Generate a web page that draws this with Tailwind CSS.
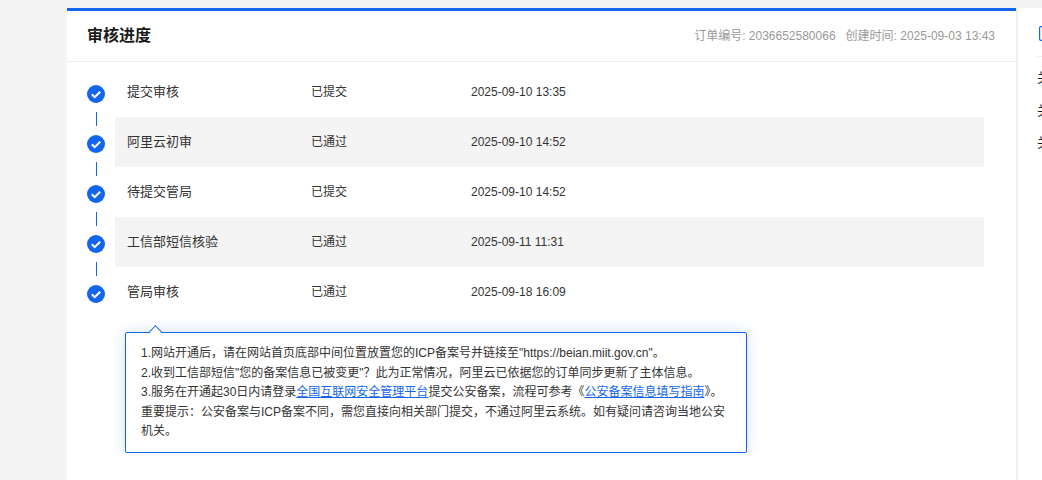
<!DOCTYPE html>
<html lang="zh-CN">
<head>
    <meta charset="UTF-8">
    <title>审核进度</title>
    <script src="https://cdn.jsdelivr.net/npm/@tailwindcss/browser@4"></script>
</head>
<body class="bg-[#f4f4f4] h-[480px] overflow-hidden font-['Liberation_Sans','Noto_Sans_CJK_SC',sans-serif] text-xs text-[#333]">
    <div class="flex pt-2 pl-[67px] h-[480px]">
        <!-- main card -->
        <main class="w-[949px] shrink-0 bg-white border-t-[3px] border-[#1366ec]">
            <header class="h-[51px] flex items-center justify-between pl-5 pr-[21px] border-b border-[#eee]">
                <h2 class="text-base font-bold text-[#1a1a1a]">审核进度</h2>
                <div class="flex gap-[10px] text-[#999]">
                    <span>订单编号: 2036652580066</span>
                    <span>创建时间: 2025-09-03 13:43</span>
                </div>
            </header>

            <div class="pt-[5px] pl-5 pr-8">
                <div class="flex h-[50px]">
                    <div class="w-[18px] shrink-0 flex flex-col items-center pt-[18px]">
                        <svg class="w-[18px] h-[18px] shrink-0" viewBox="0 0 18 18"><circle cx="9" cy="9" r="9" fill="#1366ec"/><path d="M4.8 9.2l2.9 2.9L13.2 6.7" fill="none" stroke="#fff" stroke-width="2"/></svg>
                        <div class="w-px h-[14px] mt-[9px] shrink-0 bg-[#1366ec]"></div>
                    </div>
                    <div class="flex flex-1 ml-[10px] pl-3 items-center">
                        <span class="w-[184px] text-[13px]">提交审核</span>
                        <span class="w-40">已提交</span>
                        <span>2025-09-10 13:35</span>
                    </div>
                </div>
                <div class="flex h-[50px]">
                    <div class="w-[18px] shrink-0 flex flex-col items-center pt-[18px]">
                        <svg class="w-[18px] h-[18px] shrink-0" viewBox="0 0 18 18"><circle cx="9" cy="9" r="9" fill="#1366ec"/><path d="M4.8 9.2l2.9 2.9L13.2 6.7" fill="none" stroke="#fff" stroke-width="2"/></svg>
                        <div class="w-px h-[14px] mt-[9px] shrink-0 bg-[#1366ec]"></div>
                    </div>
                    <div class="flex flex-1 ml-[10px] pl-3 items-center bg-[#f4f4f4]">
                        <span class="w-[184px] text-[13px]">阿里云初审</span>
                        <span class="w-40">已通过</span>
                        <span>2025-09-10 14:52</span>
                    </div>
                </div>
                <div class="flex h-[50px]">
                    <div class="w-[18px] shrink-0 flex flex-col items-center pt-[18px]">
                        <svg class="w-[18px] h-[18px] shrink-0" viewBox="0 0 18 18"><circle cx="9" cy="9" r="9" fill="#1366ec"/><path d="M4.8 9.2l2.9 2.9L13.2 6.7" fill="none" stroke="#fff" stroke-width="2"/></svg>
                        <div class="w-px h-[14px] mt-[9px] shrink-0 bg-[#1366ec]"></div>
                    </div>
                    <div class="flex flex-1 ml-[10px] pl-3 items-center">
                        <span class="w-[184px] text-[13px]">待提交管局</span>
                        <span class="w-40">已提交</span>
                        <span>2025-09-10 14:52</span>
                    </div>
                </div>
                <div class="flex h-[50px]">
                    <div class="w-[18px] shrink-0 flex flex-col items-center pt-[18px]">
                        <svg class="w-[18px] h-[18px] shrink-0" viewBox="0 0 18 18"><circle cx="9" cy="9" r="9" fill="#1366ec"/><path d="M4.8 9.2l2.9 2.9L13.2 6.7" fill="none" stroke="#fff" stroke-width="2"/></svg>
                        <div class="w-px h-[14px] mt-[9px] shrink-0 bg-[#1366ec]"></div>
                    </div>
                    <div class="flex flex-1 ml-[10px] pl-3 items-center bg-[#f4f4f4]">
                        <span class="w-[184px] text-[13px]">工信部短信核验</span>
                        <span class="w-40">已通过</span>
                        <span>2025-09-11 11:31</span>
                    </div>
                </div>
                <div class="flex h-[50px]">
                    <div class="w-[18px] shrink-0 flex flex-col items-center pt-[18px]">
                        <svg class="w-[18px] h-[18px] shrink-0" viewBox="0 0 18 18"><circle cx="9" cy="9" r="9" fill="#1366ec"/><path d="M4.8 9.2l2.9 2.9L13.2 6.7" fill="none" stroke="#fff" stroke-width="2"/></svg>
                    </div>
                    <div class="flex flex-1 ml-[10px] pl-3 items-center">
                        <span class="w-[184px] text-[13px]">管局审核</span>
                        <span class="w-40">已通过</span>
                        <span>2025-09-18 16:09</span>
                    </div>
                </div>
            </div>

            <!-- tip box, shadow is cut off at its bottom edge -->
            <div class="overflow-hidden ml-[38px] w-[662px] pt-[15px] px-5">
                <div class="relative w-[622px] h-[121px] bg-white border border-[#1366ec] rounded-[2px] pt-[11px] px-[15px] leading-[19.5px] shadow-[0_0_16px_rgba(19,102,236,0.2)]">
                    <div class="absolute -top-[6px] left-[25px] w-[9px] h-[9px] rotate-45 bg-white border-l border-t border-[#1366ec]"></div>
                    <p>1.网站开通后，请在网站首页底部中间位置放置您的ICP备案号并链接至"https://beian.miit.gov.cn"。</p>
                    <p>2.收到工信部短信"您的备案信息已被变更"？此为正常情况，阿里云已依据您的订单同步更新了主体信息。</p>
                    <p>3.服务在开通起30日内请登录<a href="#" class="text-[#1366ec] underline">全国互联网安全管理平台</a>提交公安备案，流程可参考《<a href="#" class="text-[#1366ec] underline">公安备案信息填写指南</a>》。</p>
                    <p>重要提示：公安备案与ICP备案不同，需您直接向相关部门提交，不通过阿里云系统。如有疑问请咨询当地公安机关。</p>
                </div>
            </div>
        </main>

        <!-- right panel, runs off the window -->
        <aside class="flex-1 bg-white border-l-2 border-[#eee] pl-[19px] overflow-hidden">
            <div class="h-[49px] border-b border-[#eee] pt-[18px] pl-[2px]">
                <svg class="w-[14px] h-[15px]" viewBox="0 0 14 15"><rect x="0.6" y="0.6" width="12.8" height="13.8" rx="1.5" fill="none" stroke="#1366ec" stroke-width="1.2"/></svg>
            </div>
            <div class="mt-[5px] text-[13px] text-[#1a1a1a] whitespace-nowrap leading-[32.5px]">
                <p>关于备案</p>
                <p>关于备案</p>
                <p>关于备案</p>
            </div>
        </aside>
    </div>
</body>
</html>
